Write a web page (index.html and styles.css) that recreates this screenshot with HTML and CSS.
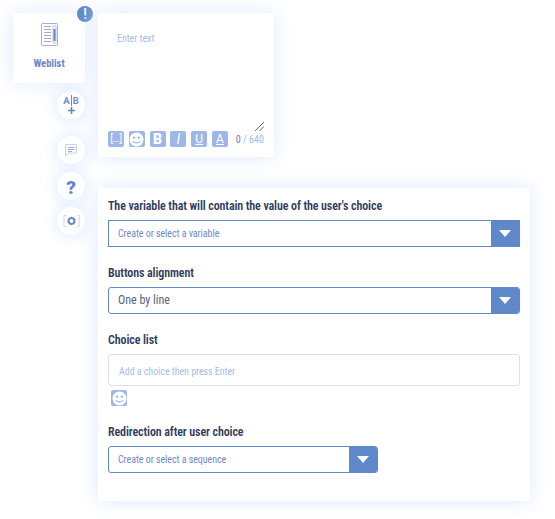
FILE: index.html
```html
<!DOCTYPE html>
<html lang="en">
<head>
<meta charset="utf-8">
<title>Weblist</title>
<link rel="stylesheet" href="styles.css">
</head>
<body>
<main class="page">
  <aside class="side">
    <div class="block card">
      <svg class="block-icon" width="18" height="24" viewBox="0 0 18 24" fill="none">
        <rect x="0.500" y="0.500" width="16" height="22" rx="1" stroke="#a9aed0"/>
        <path d="M3 3.500h7M3 6.500h7M3 9.500h7M3 12.500h7M3 15.500h7M3 18.500h7" stroke="#a3a9cc"/>
        <rect x="12" y="2.500" width="3" height="18" rx="1.500" stroke="#a3a9cc" stroke-width="0.700"/>
        <rect x="12.500" y="6" width="2" height="12" fill="#5e88c9"/>
      </svg>
      <span class="block-name">Weblist</span>
      <span class="badge">!</span>
    </div>
    <div class="tools">
      <button class="tool tool-ab" type="button">
        <span class="ab"><span>A</span><i></i><span>B</span></span>
        <svg width="9" height="9" viewBox="0 0 9 9"><path d="M4.500 1v7M1 4.500h7" stroke="#5e88c9" stroke-width="1.600"/></svg>
      </button>
      <button class="tool tool-gap-lg" type="button">
        <svg width="14" height="15" viewBox="0 0 14 15" fill="none">
          <path d="M1.500 1.500h11v8.500H4L1.500 13z" stroke="#b9c5ea" stroke-width="0.800"/>
          <path d="M4 4.500h6.500M4 6.500h6.500M4 8.500h4" stroke="#7f9ad2" stroke-width="0.800"/>
        </svg>
      </button>
      <button class="tool tool-q" type="button">?</button>
      <button class="tool" type="button">
        <svg width="17" height="14" viewBox="0 0 17 14" fill="none">
          <path d="M2.500 1.500H1v11h1.500M14.500 1.500H16v11h-1.500" stroke="#e3b7c0" stroke-width="0.800"/>
          <path d="M8.500 2.600l1 .8 1.300-.2.600 1.200 1.100.6-.2 2 .2 2-1.100.6-.6 1.200-1.300-.2-1 .8-1-.8-1.300.2-.6-1.200-1.100-.6.200-2-.2-2 1.100-.6.600-1.200 1.300.2z" fill="#5e88c9"/>
          <circle cx="8.500" cy="7" r="1.900" fill="#fff"/>
        </svg>
      </button>
    </div>
  </aside>
  <div class="content">
    <section class="editor card">
      <p class="editor-text">Enter text</p>
      <svg class="grip" width="9" height="9" viewBox="0 0 9 9"><path d="M0 9L9 0M4.500 9L9 4.500" stroke="#555" stroke-width="0.900"/></svg>
      <div class="editor-bar">
        <span class="fmt fmt-var">[...]</span>
        <span class="fmt"><svg width="15" height="15" viewBox="0 0 14 14"><circle cx="7" cy="7" r="6.500" fill="#fff"/><circle cx="4.800" cy="5.300" r="1.100" fill="#9cb7e8"/><circle cx="9.200" cy="5.300" r="1.100" fill="#9cb7e8"/><path d="M3.500 8.300c1 2.500 6 2.500 7 0" stroke="#9cb7e8" fill="none" stroke-width="1.100"/></svg></span>
        <span class="fmt fmt-b">B</span>
        <span class="fmt fmt-i">I</span>
        <span class="fmt fmt-u">U</span>
        <span class="fmt fmt-a">A</span>
        <span class="count"><b>0</b> / 640</span>
      </div>
    </section>
    <section class="settings card">
      <div class="field">
        <h2 class="label">The variable that will contain the value of the user's choice</h2>
        <div class="select square"><span class="value hint">Create or select a variable</span><span class="arrow"></span></div>
      </div>
      <div class="field">
        <h2 class="label">Buttons alignment</h2>
        <div class="select"><span class="value">One by line</span><span class="arrow"></span></div>
      </div>
      <div class="field">
        <h2 class="label">Choice list</h2>
        <div class="choice">Add a choice then press Enter</div>
        <span class="fmt fmt-emoji"><svg width="15" height="15" viewBox="0 0 14 14"><circle cx="7" cy="7" r="6.500" fill="#fff"/><circle cx="4.800" cy="5.300" r="1.100" fill="#9cb7e8"/><circle cx="9.200" cy="5.300" r="1.100" fill="#9cb7e8"/><path d="M3.500 8.300c1 2.500 6 2.500 7 0" stroke="#9cb7e8" fill="none" stroke-width="1.100"/></svg></span>
      </div>
      <div class="field">
        <h2 class="label">Redirection after user choice</h2>
        <div class="select short"><span class="value hint">Create or select a sequence</span><span class="arrow"></span></div>
      </div>
    </section>
  </div>
</main>
</body>
</html>
```
FILE: styles.css
```css
* { box-sizing: border-box; }
html, body { margin: 0; height: 100%; }
body { background: #fff; font-family: "Roboto Condensed", Roboto, "Liberation Sans", sans-serif; overflow: hidden; }
.page { display: flex; align-items: flex-start; gap: 13px; padding: 13px 0 0 13px; }
.card { background: #fff; border-radius: 3px; box-shadow: 0 0 20px 2px #e3edff; }
.side { width: 72px; display: flex; flex-direction: column; align-items: flex-end; }
.block { position: relative; width: 72px; height: 70px; display: flex; flex-direction: column; align-items: center; }
.block-icon { margin-top: 10px; margin-left: 1px; }
.block-name { margin-top: 11px; font-size: 10.500px; font-weight: 700; color: #6d86c6; line-height: 12px; font-stretch: condensed; }
.badge { position: absolute; right: -8px; top: -7px; width: 16px; height: 16px; border-radius: 50%; background: #5e88c9; color: #fff; font-family: Roboto, sans-serif; font-size: 14px; line-height: 16px; font-weight: 500; text-align: center; }
.tools { display: flex; flex-direction: column; margin-top: 8px; gap: 7px; }
.tool { width: 28px; height: 28px; border: 0; padding: 0; border-radius: 50%; background: #fff; box-shadow: 0 0 14px 3px #e3edff; display: flex; flex-direction: column; align-items: center; justify-content: center; font-family: Roboto, sans-serif; }
.tool-gap-lg { margin-top: 10px; }
.ab { display: flex; align-items: center; gap: 1px; font-size: 9.500px; line-height: 10px; font-weight: 700; color: #6d86c6; }
.ab i { width: 1px; height: 11px; background: #5e88c9; }
.tool-q { margin-top: 1px; padding-top: 2px; font-size: 19px; font-weight: 900; color: #5e88c9; }
.content { display: flex; flex-direction: column; gap: 31px; }
.editor { position: relative; width: 176px; height: 144px; padding: 20px 19px 0; }
.editor-text { margin: 0; font-size: 10px; line-height: 12px; letter-spacing: -0.050px; color: #a9bbe8; font-stretch: condensed; }
.grip { position: absolute; right: 10px; top: 109px; }
.editor-bar { position: absolute; left: 10px; bottom: 10px; display: flex; align-items: center; gap: 4.800px; }
.fmt { width: 16px; height: 16px; border-radius: 2px; background: #9cb7e8; color: #fff; font-family: Roboto, sans-serif; display: flex; align-items: center; justify-content: center; font-size: 12px; line-height: 16px; }
.fmt-var { font-size: 10px; letter-spacing: -0.300px; }
.fmt-b { font-weight: 900; font-size: 14px; }
.fmt-i { font-style: italic; font-size: 14px; }
.fmt-u, .fmt-a { text-decoration: underline; font-size: 12px; }
.count { margin-left: 3px; font-size: 10px; color: #9cb7e8; white-space: nowrap; }
.count b { font-weight: 400; color: #5f86b8; }
.settings { width: 432px; height: 313px; padding: 11px 10px 0; }
.field { margin-bottom: 19px; }
.label { margin: 0 0 7px; font-size: 12px; line-height: 14px; letter-spacing: -0.100px; font-weight: 600; color: #2f3d5c; font-stretch: condensed; white-space: nowrap; }
.select { display: flex; height: 27px; border: 1px solid #5e88c9; border-radius: 3px; overflow: hidden; }
.select.square { border-radius: 0; }
.select.short { width: 270px; }
.value { flex: 1; padding-left: 9px; font-size: 12px; line-height: 25px; color: #56647e; font-stretch: condensed; }
.value.hint { font-size: 10px; letter-spacing: -0.050px; color: #7288cc; }
.arrow { width: 28px; background: #5e88c9; display: flex; align-items: center; justify-content: center; }
.arrow::after { content: ""; border-left: 6px solid transparent; border-right: 6px solid transparent; border-top: 7px solid #fff; }
.choice { height: 32px; border: 1px solid #e0e0e0; border-radius: 3px; padding-left: 10px; font-size: 10px; line-height: 33px; letter-spacing: -0.050px; color: #a9bbe8; font-stretch: condensed; }
.fmt-emoji { margin: 4px 0 0 3px; }
```
